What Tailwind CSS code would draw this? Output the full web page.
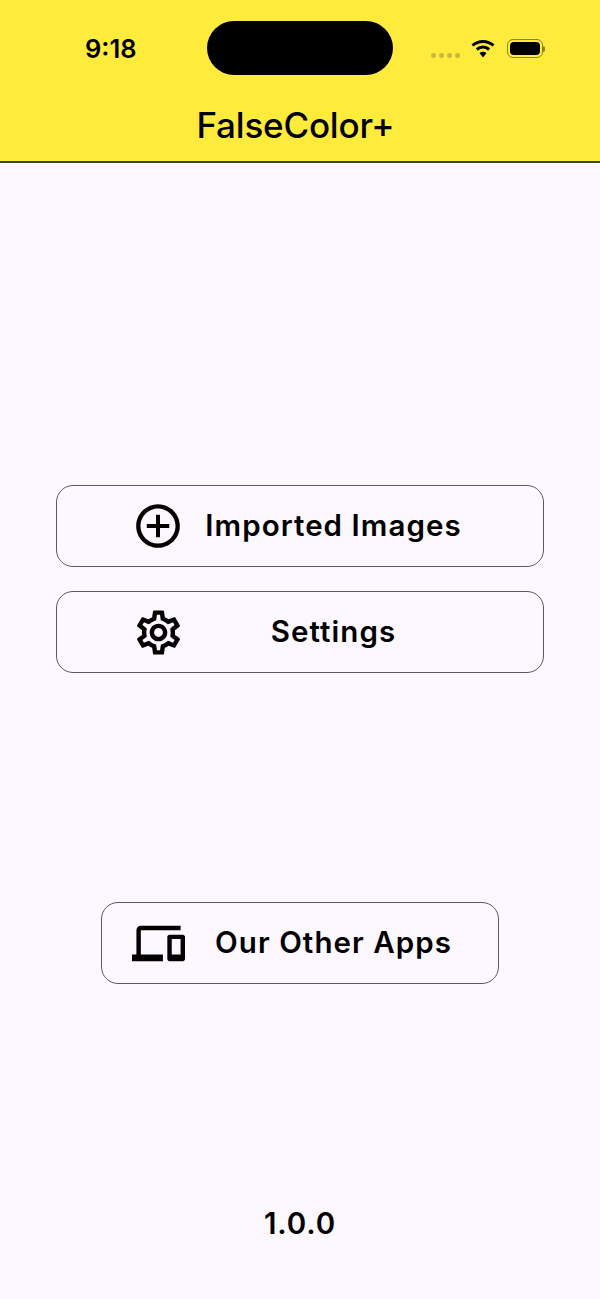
<!DOCTYPE html>
<html lang="en">

<head>
    <meta charset="UTF-8" />
    <meta name="viewport" content="width=device-width, initial-scale=1.0" />
    <script src="https://cdn.jsdelivr.net/npm/@tailwindcss/browser@4"></script>
    <title>FalseColor+</title>
</head>

<body class="bg-[#fdf8ff] text-black font-['Inter',sans-serif]">
    <div class="flex flex-col h-[1299px] w-[600px] overflow-hidden">
        <header class="bg-[#ffeb3b] h-[163px] border-b-2 border-[#3f3f2a] shrink-0">
            <div class="flex items-start pt-[21px]">
                <div class="w-[207px] pl-[85px] h-[54px] flex items-center pt-[2px] text-[25.5px] font-semibold">9:18</div>
                <div class="w-[186px] h-[54px] bg-black rounded-[27px]"></div>
                <div class="flex items-center pl-[38px] h-[54px] pt-[2px]">
                    <div class="flex gap-[3px] mt-[12px]">
                        <span class="w-[5px] h-[5px] rounded-full bg-[#c9b840]"></span>
                        <span class="w-[5px] h-[5px] rounded-full bg-[#c9b840]"></span>
                        <span class="w-[5px] h-[5px] rounded-full bg-[#c9b840]"></span>
                        <span class="w-[5px] h-[5px] rounded-full bg-[#c9b840]"></span>
                    </div>
                    <svg class="ml-[11px] w-[24px] h-[19px] mb-[2px]" viewBox="0 0 24 19" fill="none">
                        <path d="M1.5 6.5C7.5 1 16.500 1 22.500 6.500" stroke="black" stroke-width="3" />
                        <path d="M5.800 10.500C9.500 7.300 14.500 7.300 18.200 10.500" stroke="black" stroke-width="3" />
                        <path d="M8.500 14L12 18.500L15.500 14C13.500 12.300 10.500 12.300 8.500 14Z" fill="black" />
                    </svg>
                    <div class="ml-[12px] flex items-center mb-[1px]">
                        <div class="w-[36px] h-[19px] rounded-[6px] border border-[#8d8320] p-[2px]">
                            <div class="w-full h-full bg-black rounded-[4px]"></div>
                        </div>
                        <div class="w-[2px] h-[6px] bg-[#8d8320] rounded-r-full"></div>
                    </div>
                </div>
            </div>
            <h1 class="text-center text-[35px] leading-[40px] font-[550] tracking-[-0.2px] mt-[30px] pr-[9px]">FalseColor+</h1>
        </header>

        <main class="flex-1 flex flex-col items-center">
            <button class="mt-[322px] w-[488px] h-[82px] rounded-[17px] border border-[#5c5860] flex items-center pl-[74px] pr-[61px]">
                <svg class="w-[54px] h-[54px] shrink-0" viewBox="0 0 24 24" fill="black">
                    <path d="M12.900 7h-1.800v4.100H7v1.800h4.100V17h1.800v-4.100H17v-1.800h-4.100V7zM12 2.300C6.650 2.300 2.300 6.650 2.300 12S6.650 21.700 12 21.700 21.700 17.350 21.700 12 17.350 2.300 12 2.300zm0 17.500c-4.300 0-7.800-3.500-7.800-7.800S7.700 4.200 12 4.200s7.800 3.500 7.800 7.800-3.500 7.800-7.800 7.800z" />
                </svg>
                <span class="flex-1 text-center text-[29.5px] leading-[36px] font-semibold tracking-[1.05px] mb-[2px]">Imported Images</span>
            </button>

            <button class="mt-[24px] w-[488px] h-[82px] rounded-[17px] border border-[#5c5860] flex items-center pl-[74px] pr-[61px]">
                <svg class="w-[53px] h-[53px] shrink-0 ml-[1px]" viewBox="0 0 24 24" fill="black">
                    <path d="M19.430 12.980c.04-.32.07-.64.07-.98 0-.34-.03-.66-.07-.98l2.110-1.650c.19-.15.24-.42.12-.64l-2-3.460c-.09-.16-.26-.25-.44-.25-.06 0-.12.01-.17.03l-2.490 1c-.52-.4-1.080-.73-1.690-.98l-.38-2.650C14.460 2.180 14.250 2 14 2h-4c-.25 0-.46.18-.49.42l-.38 2.650c-.61.25-1.170.59-1.690.98l-2.490-1c-.06-.02-.12-.03-.18-.03-.17 0-.34.09-.43.25l-2 3.460c-.13.22-.07.49.12.64l2.110 1.650c-.04.32-.07.65-.07.98 0 .33.03.66.07.98l-2.110 1.650c-.19.15-.24.42-.12.64l2 3.460c.09.16.26.25.44.25.06 0 .12-.01.17-.03l2.490-1c.52.4 1.080.73 1.690.98l.38 2.650c.03.24.24.42.49.42h4c.25 0 .46-.18.49-.42l.38-2.650c.61-.25 1.170-.59 1.690-.98l2.490 1c.06.02.12.03.18.03.17 0 .34-.09.43-.25l2-3.460c.12-.22.07-.49-.12-.64l-2.110-1.650zm-1.980-1.710c.04.31.05.52.05.73 0 .21-.02.43-.05.73l-.14 1.130.89.7 1.080.84-.7 1.210-1.270-.51-1.040-.42-.9.68c-.43.32-.84.56-1.250.73l-1.060.43-.16 1.130-.2 1.350h-1.400l-.19-1.350-.16-1.130-1.060-.43c-.43-.18-.83-.41-1.230-.71l-.91-.7-1.060.43-1.270.51-.7-1.210 1.080-.84.89-.7-.14-1.130c-.03-.31-.05-.54-.05-.74s.02-.43.05-.73l.14-1.130-.89-.7-1.080-.84.7-1.210 1.270.51 1.040.42.9-.68c.43-.32.84-.56 1.250-.73l1.060-.43.16-1.130.2-1.350h1.390l.19 1.350.16 1.130 1.060.43c.43.18.83.41 1.230.71l.91.7 1.060-.43 1.270-.51.7 1.210-1.070.85-.89.7.14 1.130zM12 8c-2.210 0-4 1.790-4 4s1.790 4 4 4 4-1.790 4-4-1.790-4-4-4zm0 6c-1.100 0-2-.9-2-2s.9-2 2-2 2 .9 2 2-.9 2-2 2z" />
                </svg>
                <span class="flex-1 text-center text-[29.5px] leading-[36px] font-semibold tracking-[1.05px] mb-[2px]">Settings</span>
            </button>

            <button class="mt-[229px] w-[398px] h-[82px] rounded-[17px] border border-[#5c5860] flex items-center pl-[30px] pr-[16px]">
                <svg class="w-[53px] h-[53px] shrink-0" viewBox="0 0 24 24" fill="black">
                    <path d="M4 6h18V4H4c-1.100 0-2 .9-2 2v11H0v3h14v-3H4V6zm19 2h-6c-.55 0-1 .45-1 1v10c0 .55.45 1 1 1h6c.55 0 1-.45 1-1V9c0-.55-.45-1-1-1zm-1 9h-4v-7h4v7z" />
                </svg>
                <span class="flex-1 text-center text-[29.5px] leading-[36px] font-semibold tracking-[1.05px] mb-[2px]">Our Other Apps</span>
            </button>

            <p class="mt-[222px] text-[29.5px] leading-[34px] font-semibold tracking-[0.9px]">1.0.0</p>
        </main>
    </div>
</body>

</html>
